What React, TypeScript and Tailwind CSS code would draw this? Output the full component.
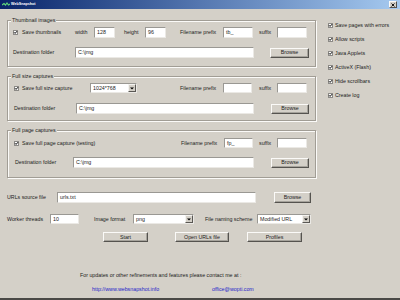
import React from "react";

function Check() {
  return (
    <svg width="5" height="5" viewBox="0 0 5 5" className="shrink-0 block">
      <rect x="0.5" y="0.5" width="4" height="4" fill="#fff" stroke="#8c8a86" strokeWidth="1" />
      <path d="M1.1 2.3 L2.1 3.4 L4 1.2" stroke="#000" strokeWidth="1" fill="none" />
    </svg>
  );
}

function Input({ w, h = "h-[11px]", v = "" }: { w: string; h?: string; v?: string }) {
  return (
    <div
      className={`${w} ${h} shrink-0 bg-white border border-[#9a9893] border-b-[#ebe9e5] border-r-[#ebe9e5] flex items-center pl-[2px] whitespace-nowrap overflow-hidden`}
    >
      {v}
    </div>
  );
}

function Select({ w, v, h = "h-[10px]" }: { w: string; v: string; h?: string }) {
  return (
    <div
      className={`${w} ${h} shrink-0 bg-white border border-[#9a9893] border-b-[#ebe9e5] border-r-[#ebe9e5] flex items-center`}
    >
      <span className="pl-[2px] flex-1 whitespace-nowrap overflow-hidden">{v}</span>
      <div className="w-[8px] h-full bg-[#d4d0c8] border border-[#f4f3f0] border-r-[#5a5854] border-b-[#5a5854] flex items-center justify-center">
        <svg width="4" height="3" viewBox="0 0 4 3">
          <path d="M0 0.5 L4 0.5 L2 2.6 Z" fill="#000" />
        </svg>
      </div>
    </div>
  );
}

function Btn({ w, label, cls = "", h = "h-[10px]" }: { w: string; label: string; cls?: string; h?: string }) {
  return (
    <div
      className={`${w} ${h} ${cls} shrink-0 bg-[#d4d0c8] border border-[#fbfaf8] border-r-[#55534f] border-b-[#55534f] shadow-[inset_-1px_-1px_0_#a6a39c] flex items-center justify-center whitespace-nowrap`}
    >
      {label}
    </div>
  );
}

function Group({ title, cls, children }: { title: string; cls: string; children: React.ReactNode }) {
  return (
    <fieldset
      className={`border border-[#a19d95] shadow-[inset_1px_1px_0_#fbfaf8,1px_1px_0_#fbfaf8] ${cls}`}
    >
      <legend className="ml-[3px] px-[1px] leading-[7px] bg-[#d4d0c8]">{title}</legend>
      {children}
    </fieldset>
  );
}

export default function App() {
  return (
    <div className="w-[400px] h-[300px] bg-[#d4d0c8] flex flex-col overflow-hidden border-b-2 border-[#4a4946] text-[5.3px] leading-[7px] text-[#1c1c1c] font-['Liberation_Sans',Arial,sans-serif]">
      {/* title bar */}
      <div className="h-[9px] shrink-0 flex items-center px-[2px] bg-gradient-to-r from-[#0a246a] via-[#5577b0] to-[#a6caf0]">
        <svg width="8" height="5" viewBox="0 0 8 5" className="shrink-0">
          <path d="M0 3 L2 1.5 L3.5 3 L5 1 L6.5 3 L8 2" stroke="#5fd47a" strokeWidth="1.2" fill="none" />
        </svg>
        <span className="ml-[1px] text-white font-bold text-[3.7px] leading-[5px]">WebSnapshot</span>
        <div className="ml-auto mr-[1px] w-[8px] h-[7px] bg-[#d4d0c8] border border-[#fbfaf8] border-r-[#55534f] border-b-[#55534f] flex items-center justify-center">
          <svg width="4" height="4" viewBox="0 0 4 4">
            <path d="M0.5 0.5 L3.5 3.5 M3.5 0.5 L0.5 3.5" stroke="#000" strokeWidth="0.9" />
          </svg>
        </div>
      </div>

      {/* body */}
      <div className="flex items-start pl-[7px]">
        <div className="w-[309px] mt-[8px] flex flex-col">
          <Group title="Thumbnail images" cls="pt-[3px] pb-[8px]">
            <div className="flex items-center h-[11px]">
              <span className="ml-[5px]"><Check /></span>
              <span className="ml-[4px] w-[53px] whitespace-nowrap">Save thumbnails</span>
              <span className="w-[19px]">width</span>
              <Input w="w-[21px]" v="128" />
              <span className="ml-[9px] w-[21px]">height</span>
              <Input w="w-[21px]" v="96" />
              <span className="ml-[14px] w-[43px] whitespace-nowrap">Filename prefix</span>
              <Input w="w-[30px]" v="tb_" />
              <span className="ml-[6px] w-[18px]">suffix</span>
              <Input w="w-[30px]" />
            </div>
            <div className="flex items-center h-[11px] mt-[9px]">
              <span className="ml-[5px] w-[62px] whitespace-nowrap">Destination folder</span>
              <Input w="w-[179px]" v="C:\jmg" />
              <Btn w="w-[39px]" cls="ml-[16px]" label="Browse" />
            </div>
          </Group>

          <Group title="Full size captures" cls="mt-[6px] pt-[3px] pb-[6px]">
            <div className="flex items-center h-[10px]">
              <span className="ml-[6px]"><Check /></span>
              <span className="ml-[3px] w-[68px] whitespace-nowrap">Save full size capture</span>
              <Select w="w-[47px]" v="1024*768" />
              <span className="ml-[43px] w-[43px] whitespace-nowrap">Filename prefix</span>
              <Input w="w-[29px]" h="h-[10px]" />
              <span className="ml-[7px] w-[18px]">suffix</span>
              <Input w="w-[30px]" h="h-[10px]" />
            </div>
            <div className="flex items-center h-[11px] mt-[10px]">
              <span className="ml-[6px] w-[62px] whitespace-nowrap">Destination folder</span>
              <Input w="w-[178px]" v="C:\jmg" />
              <Btn w="w-[38px]" cls="ml-[17px]" label="Browse" />
            </div>
          </Group>

          <Group title="Full page captures" cls="mt-[6px] pt-[4px] pb-[9px]">
            <div className="flex items-center h-[10px]">
              <span className="ml-[6px]"><Check /></span>
              <span className="ml-[3px] w-[159px] whitespace-nowrap">Save full page capture (testing)</span>
              <span className="w-[43px] whitespace-nowrap">Filename prefix</span>
              <Input w="w-[29px]" h="h-[10px]" v="fp_" />
              <span className="ml-[6px] w-[18px]">suffix</span>
              <Input w="w-[30px]" h="h-[10px]" />
            </div>
            <div className="flex items-center h-[11px] mt-[9px]">
              <span className="ml-[7px] w-[58px] whitespace-nowrap">Destination folder</span>
              <Input w="w-[181px]" v="C:\jmg" />
              <Btn w="w-[38px]" cls="ml-[17px]" label="Browse" />
            </div>
          </Group>
        </div>

        <div className="ml-[12px] mt-[13px] flex flex-col gap-[7px]">
          {["Save pages with errors", "Allow scripts", "Java Applets", "ActiveX (Flash)", "Hide scrollbars", "Create log"].map(
            (t) => (
              <div key={t} className="flex items-center h-[7px]">
                <Check />
                <span className="ml-[2px] whitespace-nowrap">{t}</span>
              </div>
            )
          )}
        </div>
      </div>

      {/* URLs source */}
      <div className="flex items-center h-[11px] mt-[14px]">
        <span className="ml-[7px] w-[50px] whitespace-nowrap">URLs source file</span>
        <Input w="w-[199px]" v="urls.txt" />
        <Btn w="w-[37px]" h="h-[11px]" cls="ml-[18px]" label="Browse" />
      </div>

      {/* worker row */}
      <div className="flex items-center h-[10px] mt-[11px]">
        <span className="ml-[7px] w-[43px] whitespace-nowrap">Worker threads</span>
        <Input w="w-[29px]" h="h-[10px]" v="10" />
        <span className="ml-[15px] w-[39px] whitespace-nowrap">Image format</span>
        <Select w="w-[61px]" v="png" />
        <span className="ml-[11px] w-[52px] whitespace-nowrap">File naming scheme</span>
        <Select w="w-[54px]" v="Modified URL" />
      </div>

      {/* buttons */}
      <div className="flex items-center h-[10px] mt-[8px]">
        <Btn w="w-[45px]" cls="ml-[103px]" label="Start" />
        <Btn w="w-[54px]" cls="ml-[27px]" label="Open URLs file" />
        <Btn w="w-[55px]" cls="ml-[18px]" label="Profiles" />
      </div>

      {/* footer */}
      <div className="mt-[30px] ml-[80px] whitespace-nowrap">
        For updates or other refinements and features please contact me at :
      </div>
      <div className="mt-[7px] flex text-[#2424c8] whitespace-nowrap">
        <span className="ml-[92px] w-[120px]">http://www.websnapshot.info</span>
        <span>office@wopti.com</span>
      </div>
    </div>
  );
}
